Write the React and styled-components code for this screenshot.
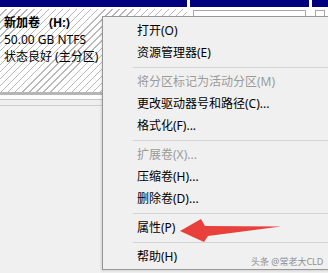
import React from "react";
import styled, { createGlobalStyle } from "styled-components";

const GlobalStyle = createGlobalStyle`
  html, body {
    margin: 0;
    padding: 0;
    background: #f0f0f0;
  }
  body {
    font-family: "Noto Sans", "Noto Sans CJK SC", sans-serif;
  }
`;

// Fenêtre entière
const Screen = styled.div`
  position: relative;
  width: 328px;
  height: 273px;
  overflow: hidden;
  background: #f0f0f0;
`;

// Ligne des partitions du disque
const DiskRow = styled.div`
  display: flex;
  gap: 3px;
  background: #ffffff;
  border-bottom: 1px solid #c4c4c4;
  padding-bottom: 4px;
  box-shadow: 0 5px 0 #f0f0f0, 0 6px 0 #cfcfcf;
`;

const Partition = styled.div`
  display: flex;
  flex-direction: column;
  width: ${(p) => (p.$w ? `${p.$w}px` : "auto")};
  flex: ${(p) => (p.$w ? "none" : "1")};
`;

const TopBar = styled.div`
  height: 7px;
  background: #00007f;
`;

const HatchBody = styled.div`
  margin-top: 2px;
  height: 78px;
  padding: 5px 4px 0;
  background-color: #ffffff;
  background-image: repeating-linear-gradient(
    135deg,
    transparent 0px,
    transparent 4px,
    #b8b8b8 4px,
    #b8b8b8 5px
  );
  border-bottom: 3px solid #b6b6b6;
  font-size: 12px;
  line-height: 17px;
  color: #000;
`;

const VolumeName = styled.div`
  font-weight: bold;
  span {
    margin-left: 9px;
  }
`;

const Line = styled.div``;

const EmptyBody = styled.div`
  margin: 3px 3px 0;
  height: 81px;
  background: #ffffff;
  border: 1px solid #a8a8a8;
`;

// Menu contextuel
const Menu = styled.div`
  position: absolute;
  left: 102px;
  top: 16px;
  width: 240px;
  padding: 3px 0 1px;
  background: #f0f0f0;
  border: 1px solid #979797;
  box-shadow: -1px 1px 2px rgba(0, 0, 0, 0.12);
  font-size: 12px;
  font-family: "Noto Sans", "Noto Sans CJK SC", sans-serif;
`;

const Item = styled.div`
  height: 22px;
  line-height: 22px;
  padding-left: 34px;
  white-space: nowrap;
  color: ${(p) => (p.$disabled ? "#9b9b9b" : "#000000")};
`;

const Separator = styled.div`
  height: 7px;
  display: flex;
  align-items: center;
  padding-left: 30px;
  &::after {
    content: "";
    flex: 1;
    height: 1px;
    background: #d4d4d4;
  }
`;

const Watermark = styled.div`
  position: absolute;
  left: 251px;
  top: 256px;
  font-size: 9px;
  line-height: 12px;
  color: #8f8f8f;
  font-family: "Noto Sans", "Noto Sans CJK SC", sans-serif;
  white-space: nowrap;
`;

const Arrow = styled.svg`
  position: absolute;
  left: 0;
  top: 0;
  pointer-events: none;
`;

const items = [
  { t: "打开(O)" },
  { t: "资源管理器(E)" },
  { sep: true },
  { t: "将分区标记为活动分区(M)", disabled: true },
  { t: "更改驱动器号和路径(C)..." },
  { t: "格式化(F)..." },
  { sep: true },
  { t: "扩展卷(X)...", disabled: true },
  { t: "压缩卷(H)..." },
  { t: "删除卷(D)..." },
  { sep: true },
  { t: "属性(P)" },
  { sep: true },
  { t: "帮助(H)" },
];

const App = () => {
  return (
    <Screen>
      <GlobalStyle />
      <DiskRow>
        <Partition $w={187}>
          <TopBar />
          <HatchBody>
            <VolumeName>
              新加卷<span>(H:)</span>
            </VolumeName>
            <Line>50.00 GB NTFS</Line>
            <Line>状态良好 (主分区)</Line>
          </HatchBody>
        </Partition>
        <Partition $w={119}>
          <TopBar />
          <EmptyBody />
        </Partition>
        <Partition>
          <TopBar />
          <EmptyBody />
        </Partition>
      </DiskRow>

      <Menu>
        {items.map((it, i) =>
          it.sep ? (
            <Separator key={i} />
          ) : (
            <Item key={i} $disabled={it.disabled}>
              {it.t}
            </Item>
          )
        )}
      </Menu>

      <Arrow width="328" height="273" viewBox="0 0 328 273">
        <path
          d="M180,231 L201,219 L205,226 L281,226.5 L208,236 L204,242 Z"
          fill="#e8403b"
        />
      </Arrow>

      <Watermark>头条 @常老大CLD</Watermark>
    </Screen>
  );
};

export default App;
